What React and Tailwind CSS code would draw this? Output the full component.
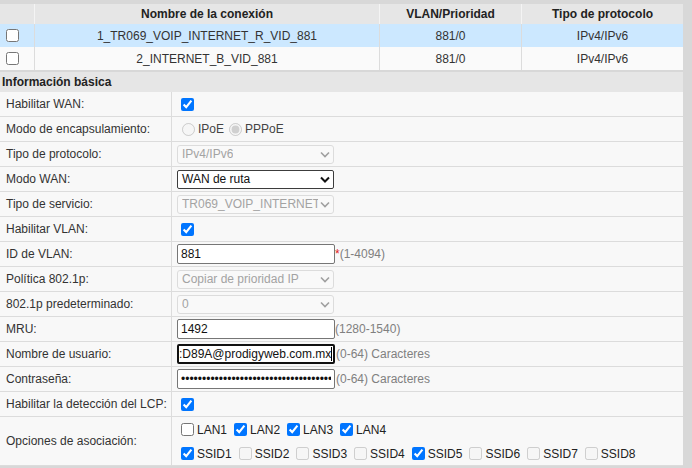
import React from 'react';

function Chevron({ dark }) {
  return (
    <svg width="10" height="7" viewBox="0 0 10 7" className="shrink-0">
      <polyline
        points="1,1.5 5,5.5 9,1.5"
        fill="none"
        stroke={dark ? '#111' : '#a0a0a0'}
        strokeWidth={dark ? 2 : 1.6}
      />
    </svg>
  );
}

function Select({ value, disabled }) {
  if (disabled) {
    return (
      <div className="w-[157px] h-[19px] border border-[#dcdcdc] rounded-[3px] bg-[#f9f9f9] flex items-center justify-between pl-[4px] pr-[3px] text-[#a3a3a3] overflow-hidden">
        <span className="max-w-[136px] whitespace-nowrap overflow-hidden">{value}</span>
        <Chevron />
      </div>
    );
  }
  return (
    <div className="w-[157px] h-[19px] border border-[#3c3c3c] rounded-[2px] bg-white flex items-center justify-between pl-[4px] pr-[3px] text-[#111]">
      <span className="whitespace-nowrap">{value}</span>
      <Chevron dark />
    </div>
  );
}

function Check({ checked, disabled }) {
  return (
    <input
      type="checkbox"
      defaultChecked={checked}
      disabled={disabled}
      className="w-[13px] h-[13px] m-0 ml-1 mr-[3px] shrink-0"
    />
  );
}

function Row({ label, children, tall }) {
  return (
    <div className={tall ? 'flex border-b border-[#dcdcdc] h-[49px]' : 'flex border-b border-[#dcdcdc] h-[25px]'}>
      <div className="w-[172px] shrink-0 flex items-center pl-[6px] border-r border-[#dcdcdc] whitespace-nowrap">
        {label}
      </div>
      <div className="flex-1 flex items-center pl-[5px]">{children}</div>
    </div>
  );
}

const lans = [
  { n: 'LAN1', c: false },
  { n: 'LAN2', c: true },
  { n: 'LAN3', c: true },
  { n: 'LAN4', c: true },
];

const ssids = [
  { n: 'SSID1', c: true },
  { n: 'SSID2', c: false, d: true },
  { n: 'SSID3', c: false, d: true },
  { n: 'SSID4', c: false, d: true },
  { n: 'SSID5', c: true },
  { n: 'SSID6', c: false, d: true },
  { n: 'SSID7', c: false, d: true },
  { n: 'SSID8', c: false, d: true },
];

export default function App() {
  return (
    <div className="w-[692px] h-[468px] overflow-hidden bg-[#d8d8d8] pt-1 font-['Liberation_Sans',Arial,sans-serif] text-[12px] text-[#333]">
      <div className="w-[683px]">
        {/* connections table */}
        <div className="grid grid-cols-[35px_345px_142px_1fr]">
          <div className="h-[20px] bg-[#e6e6e6] border-r border-[#f4f4f4]" />
          <div className="h-[20px] bg-[#e6e6e6] border-r border-[#f4f4f4] flex items-center justify-center font-bold text-[#222]">Nombre de la conexión</div>
          <div className="h-[20px] bg-[#e6e6e6] border-r border-[#f4f4f4] flex items-center justify-center font-bold text-[#222]">VLAN/Prioridad</div>
          <div className="h-[20px] bg-[#e6e6e6] flex items-center justify-center font-bold text-[#222]">Tipo de protocolo</div>

          <div className="h-[23px] bg-[#cce8ff] border-r border-[#dcdcdc] flex items-center pl-[2px]">
            <Check />
          </div>
          <div className="h-[23px] bg-[#cce8ff] border-r border-[#dcdcdc] flex items-center justify-center">1_TR069_VOIP_INTERNET_R_VID_881</div>
          <div className="h-[23px] bg-[#cce8ff] border-r border-[#dcdcdc] flex items-center justify-center">881/0</div>
          <div className="h-[23px] bg-[#cce8ff] flex items-center justify-center">IPv4/IPv6</div>

          <div className="h-[23px] bg-[#fafafa] border-r border-[#dcdcdc] flex items-center pl-[2px]">
            <Check />
          </div>
          <div className="h-[23px] bg-[#fafafa] border-r border-[#dcdcdc] flex items-center justify-center">2_INTERNET_B_VID_881</div>
          <div className="h-[23px] bg-[#fafafa] border-r border-[#dcdcdc] flex items-center justify-center">881/0</div>
          <div className="h-[23px] bg-[#fafafa] flex items-center justify-center">IPv4/IPv6</div>
        </div>

        {/* basic info */}
        <div className="mt-[2px] bg-[#f8f8f8]">
          <div className="h-[20px] bg-[#e6e6e6] flex items-center pl-[2px] font-bold text-[#222]">Información básica</div>

          <Row label="Habilitar WAN:">
            <Check checked />
          </Row>
          <Row label="Modo de encapsulamiento:">
            <input type="radio" disabled className="w-[13px] h-[13px] m-0 ml-[5px] mr-[3px]" />
            <span className="text-[#444]">IPoE</span>
            <input type="radio" disabled defaultChecked className="w-[13px] h-[13px] m-0 ml-[5px] mr-[3px]" />
            <span className="text-[#444]">PPPoE</span>
          </Row>
          <Row label="Tipo de protocolo:">
            <Select value="IPv4/IPv6" disabled />
          </Row>
          <Row label="Modo WAN:">
            <Select value="WAN de ruta" />
          </Row>
          <Row label="Tipo de servicio:">
            <Select value="TR069_VOIP_INTERNET" disabled />
          </Row>
          <Row label="Habilitar VLAN:">
            <Check checked />
          </Row>
          <Row label="ID de VLAN:">
            <div className="w-[158px] h-[20px] border border-[#767676] rounded-[2px] bg-white flex items-center px-[3px] text-[#111]">881</div>
            <span className="text-[#e02020]">*</span>
            <span className="text-[#808080]">(1-4094)</span>
          </Row>
          <Row label="Política 802.1p:">
            <Select value="Copiar de prioridad IP" disabled />
          </Row>
          <Row label="802.1p predeterminado:">
            <Select value="0" disabled />
          </Row>
          <Row label="MRU:">
            <div className="w-[158px] h-[20px] border border-[#767676] rounded-[2px] bg-white flex items-center px-[3px] text-[#111]">1492</div>
            <span className="text-[#808080]">(1280-1540)</span>
          </Row>
          <Row label="Nombre de usuario:">
            <div className="w-[158px] h-[20px] border-2 border-[#111] rounded-[2px] bg-white flex items-center overflow-hidden text-[#111]">
              <span className="whitespace-nowrap">:D89A@prodigyweb.com.mx</span>
              <span className="w-px h-[14px] bg-black shrink-0" />
            </div>
            <span className="ml-px text-[#808080]">(0-64) Caracteres</span>
          </Row>
          <Row label="Contraseña:">
            <input
              type="password"
              readOnly
              value="abcdefghijabcdefghijabcdefghijabcdefghijabcdefghij"
              className="w-[158px] h-[20px] border border-[#767676] rounded-[2px] bg-white px-[3px] text-[#111] outline-none"
            />
            <span className="ml-px text-[#808080]">(0-64) Caracteres</span>
          </Row>
          <Row label="Habilitar la detección del LCP:">
            <Check checked />
          </Row>
          <Row label="Opciones de asociación:" tall>
            <div className="flex flex-col gap-[10px] leading-[14px] pt-px">
              <div className="flex items-center">
                {lans.map((l) => (
                  <div key={l.n} className="flex items-center mr-[3px]">
                    <Check checked={l.c} />
                    <span className="text-[#222]">{l.n}</span>
                  </div>
                ))}
              </div>
              <div className="flex items-center">
                {ssids.map((s) => (
                  <div key={s.n} className="flex items-center mr-[3px]">
                    <Check checked={s.c} disabled={s.d} />
                    <span className="text-[#222]">{s.n}</span>
                  </div>
                ))}
              </div>
            </div>
          </Row>
        </div>
      </div>
    </div>
  );
}
